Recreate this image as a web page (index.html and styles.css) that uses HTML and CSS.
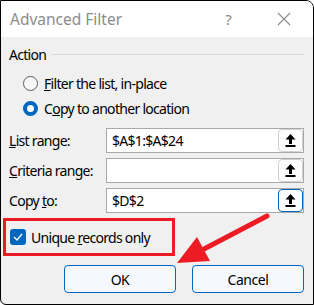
FILE: index.html
```html
<!DOCTYPE html>
<html lang="en">

<head>
  <meta charset="UTF-8">
  <title>Advanced Filter</title>
  <link rel="stylesheet" href="styles.css">
</head>

<body>
  <div class="window">
    <div class="titlebar">
      <span class="title">Advanced Filter</span>
      <span class="help">?</span>
      <svg class="close" width="14" height="14" viewBox="0 0 14 14">
        <path d="M1 1 L13 13 M13 1 L1 13" stroke="#8a8a8a" stroke-width="1.1" fill="none" />
      </svg>
    </div>

    <div class="content">
      <div class="group-head">
        <span>Action</span>
        <div class="rule"></div>
      </div>

      <div class="radio-list">
        <label class="radio">
          <span class="dot"></span>
          <span><u>F</u>ilter the list, in-place</span>
        </label>
        <label class="radio checked">
          <span class="dot"></span>
          <span>C<u>o</u>py to another location</span>
        </label>
      </div>

      <div class="fields">
        <div class="field">
          <span class="field-label"><u>L</u>ist range:</span>
          <div class="ref-box">
            <span class="ref-text">$A$1:$A$24</span>
            <button class="collapse">
              <svg width="11" height="13" viewBox="0 0 11 13"><path d="M5.5 0 L10.5 5.5 L7 5.5 L7 10 L4 10 L4 5.5 L0.5 5.5 Z M0.5 11 H10.5 V13 H0.5 Z" fill="#000" /></svg>
            </button>
          </div>
        </div>
        <div class="field">
          <span class="field-label"><u>C</u>riteria range:</span>
          <div class="ref-box">
            <span class="ref-text"></span>
            <button class="collapse">
              <svg width="11" height="13" viewBox="0 0 11 13"><path d="M5.5 0 L10.5 5.5 L7 5.5 L7 10 L4 10 L4 5.5 L0.5 5.5 Z M0.5 11 H10.5 V13 H0.5 Z" fill="#000" /></svg>
            </button>
          </div>
        </div>
        <div class="field">
          <span class="field-label">Copy <u>t</u>o:</span>
          <div class="ref-box">
            <span class="ref-text">$D$2</span>
            <button class="collapse focused">
              <svg width="11" height="13" viewBox="0 0 11 13"><path d="M5.5 0 L10.5 5.5 L7 5.5 L7 10 L4 10 L4 5.5 L0.5 5.5 Z M0.5 11 H10.5 V13 H0.5 Z" fill="#000" /></svg>
            </button>
          </div>
        </div>
      </div>

      <div class="unique-box">
        <span class="check">
          <svg width="10" height="8" viewBox="0 0 10 8"><path d="M1 4 L4 7 L9 1" stroke="#fff" stroke-width="1.3" fill="none" /></svg>
        </span>
        <span>Unique <u>r</u>ecords only</span>
      </div>

      <div class="actions">
        <button class="btn">OK</button>
        <button class="btn">Cancel</button>
      </div>
    </div>

    <svg class="arrow" width="314" height="305" viewBox="0 0 314 305">
      <line x1="204" y1="249" x2="267" y2="216" stroke="#ed1c24" stroke-width="5" stroke-linecap="round" />
      <polygon points="177,263 197,237 210,261" fill="#ed1c24" />
    </svg>
  </div>
</body>

</html>
```

FILE: styles.css
```css
body {
  margin: 0;
  font-family: 'Noto Sans', sans-serif;
  font-size: 14px;
  letter-spacing: -0.7px;
  color: #000;
}

.window {
  position: relative;
  width: 314px;
  height: 305px;
  box-sizing: border-box;
  border: 1px solid #000;
  border-radius: 0 8px 0 6px;
  background: #f0f0f0;
  overflow: hidden;
}

.titlebar {
  height: 36px;
  background: #fff;
  display: flex;
  align-items: center;
  padding-left: 9px;
}

.title {
  font-size: 15.5px;
  letter-spacing: 0;
  color: #8c8c8c;
  flex: 1;
}

.help {
  font-size: 15px;
  color: #8a8a8a;
  margin-right: 46px;
}

.close {
  margin-right: 22px;
}

.content {
  padding: 7px 9px 0 8px;
}

.group-head {
  display: flex;
  align-items: center;
  height: 20px;
}

.group-head .rule {
  flex: 1;
  height: 1px;
  background: #d9d9d9;
  margin-left: 6px;
}

.radio-list {
  margin-top: 7px;
}

.radio {
  display: flex;
  align-items: center;
  height: 25px;
  padding-left: 14px;
}

.radio .dot {
  width: 13px;
  height: 13px;
  border: 1px solid #5d5d5d;
  border-radius: 50%;
  background: #f7f7f7;
  margin-right: 6px;
  box-sizing: content-box;
}

.radio.checked .dot {
  width: 7px;
  height: 7px;
  border: 4px solid #0067c0;
  background: #fff;
}

.fields {
  margin-top: 7px;
  display: flex;
  flex-direction: column;
  gap: 5px;
}

.field {
  display: flex;
  align-items: center;
  height: 25px;
}

.field-label {
  width: 97px;
  flex-shrink: 0;
}

.ref-box {
  flex: 1;
  height: 25px;
  box-sizing: border-box;
  border: 1px solid #a8a8a8;
  background: #fff;
  display: flex;
  align-items: center;
  padding-left: 5px;
}

.ref-text {
  flex: 1;
}

.collapse {
  width: 25px;
  height: 23px;
  box-sizing: border-box;
  border: 1px solid #d0d0d0;
  border-radius: 4px;
  background: #fdfdfd;
  display: flex;
  align-items: center;
  justify-content: center;
  padding: 0;
}

.collapse.focused {
  border-color: #0067c0;
}

.unique-box {
  margin: 5px 0 0 -6px;
  width: 172px;
  height: 38px;
  box-sizing: border-box;
  border: 3px solid #ed1c24;
  display: flex;
  align-items: center;
  padding-left: 4px;
}

.check {
  width: 16px;
  height: 16px;
  border-radius: 3px;
  background: #0067c0;
  display: flex;
  align-items: center;
  justify-content: center;
  margin-right: 5px;
}

.actions {
  margin-top: 9px;
  display: flex;
  justify-content: flex-end;
  gap: 16px;
}

.btn {
  width: 112px;
  height: 28px;
  border: 1px solid #0067c0;
  border-radius: 4px;
  background: #f5f9fd;
  font-family: 'Noto Sans', sans-serif;
  font-size: 14px;
  letter-spacing: -0.45px;
  color: #000;
}

.arrow {
  position: absolute;
  top: -1px;
  left: -1px;
  pointer-events: none;
}
```
